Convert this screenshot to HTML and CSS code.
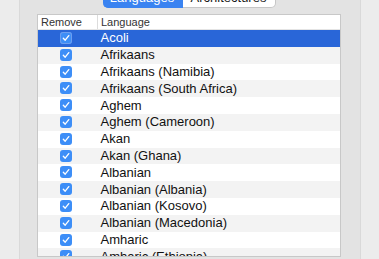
FILE: index.html
```html
<!DOCTYPE html>
<html lang="en">
<head>
    <meta charset="UTF-8">
    <title>Languages</title>
    <link rel="stylesheet" href="styles.css">
</head>
<body>
    <div class="panel">
        <div class="tabs">
            <button class="tab active">Languages</button>
            <button class="tab">Architectures</button>
        </div>
        <div class="list">
            <table>
                <thead>
                    <tr>
                        <th class="col-remove">Remove</th>
                        <th class="col-lang">Language</th>
                    </tr>
                </thead>
                <tbody>
                    <tr class="selected"><td class="col-remove"><span class="check"><svg viewBox="0 0 12 12"><path d="M3.3 6.2 L5.2 8.2 L8.8 3.6" /></svg></span></td><td>Acoli</td></tr>
                    <tr><td class="col-remove"><span class="check"><svg viewBox="0 0 12 12"><path d="M3.3 6.2 L5.2 8.2 L8.8 3.6" /></svg></span></td><td>Afrikaans</td></tr>
                    <tr><td class="col-remove"><span class="check"><svg viewBox="0 0 12 12"><path d="M3.3 6.2 L5.2 8.2 L8.8 3.6" /></svg></span></td><td>Afrikaans (Namibia)</td></tr>
                    <tr><td class="col-remove"><span class="check"><svg viewBox="0 0 12 12"><path d="M3.3 6.2 L5.2 8.2 L8.8 3.6" /></svg></span></td><td>Afrikaans (South Africa)</td></tr>
                    <tr><td class="col-remove"><span class="check"><svg viewBox="0 0 12 12"><path d="M3.3 6.2 L5.2 8.2 L8.8 3.6" /></svg></span></td><td>Aghem</td></tr>
                    <tr><td class="col-remove"><span class="check"><svg viewBox="0 0 12 12"><path d="M3.3 6.2 L5.2 8.2 L8.8 3.6" /></svg></span></td><td>Aghem (Cameroon)</td></tr>
                    <tr><td class="col-remove"><span class="check"><svg viewBox="0 0 12 12"><path d="M3.3 6.2 L5.2 8.2 L8.8 3.6" /></svg></span></td><td>Akan</td></tr>
                    <tr><td class="col-remove"><span class="check"><svg viewBox="0 0 12 12"><path d="M3.3 6.2 L5.2 8.2 L8.8 3.6" /></svg></span></td><td>Akan (Ghana)</td></tr>
                    <tr><td class="col-remove"><span class="check"><svg viewBox="0 0 12 12"><path d="M3.3 6.2 L5.2 8.2 L8.8 3.6" /></svg></span></td><td>Albanian</td></tr>
                    <tr><td class="col-remove"><span class="check"><svg viewBox="0 0 12 12"><path d="M3.3 6.2 L5.2 8.2 L8.8 3.6" /></svg></span></td><td>Albanian (Albania)</td></tr>
                    <tr><td class="col-remove"><span class="check"><svg viewBox="0 0 12 12"><path d="M3.3 6.2 L5.2 8.2 L8.8 3.6" /></svg></span></td><td>Albanian (Kosovo)</td></tr>
                    <tr><td class="col-remove"><span class="check"><svg viewBox="0 0 12 12"><path d="M3.3 6.2 L5.2 8.2 L8.8 3.6" /></svg></span></td><td>Albanian (Macedonia)</td></tr>
                    <tr><td class="col-remove"><span class="check"><svg viewBox="0 0 12 12"><path d="M3.3 6.2 L5.2 8.2 L8.8 3.6" /></svg></span></td><td>Amharic</td></tr>
                    <tr><td class="col-remove"><span class="check"><svg viewBox="0 0 12 12"><path d="M3.3 6.2 L5.2 8.2 L8.8 3.6" /></svg></span></td><td>Amharic (Ethiopia)</td></tr>
                </tbody>
            </table>
        </div>
    </div>
</body>
</html>
```

FILE: styles.css
```css
body {
    margin: 0;
    background-color: #ececec;
    font-family: "Liberation Sans", Arial, sans-serif;
    height: 259px;
    overflow: hidden;
}
.panel {
    margin: -14px 0 0 19px;
    width: 342px;
    height: 273px;
    box-sizing: border-box;
    background-color: #e3e3e3;
    border-left: 1px solid #d9d9d9;
    border-right: 1px solid #d9d9d9;
    padding: 0 19px 0 17px;
}
.tabs {
    display: flex;
    justify-content: center;
}
.tab {
    font-family: inherit;
    font-size: 13px;
    height: 22px;
    padding: 0;
    background-color: #fff;
    color: #1a1a1a;
    border: 1px solid #c6c6c6;
    border-left: none;
    border-radius: 0 5px 5px 0;
    width: 93px;
}
.tab.active {
    width: 80px;
    background-color: #3a83f1;
    border-color: #3a83f1;
    color: #fff;
    border-radius: 5px 0 0 5px;
}
.list {
    margin-top: 6px;
    height: 243px;
    box-sizing: border-box;
    overflow: hidden;
    background-color: #fff;
    border: 1px solid #c8c8c8;
}
table {
    width: 100%;
    border-collapse: collapse;
}
th {
    font-size: 11px;
    font-weight: normal;
    color: #333;
    text-align: left;
    height: 14px;
    padding: 0 0 0 3px;
    border-bottom: 1px solid #e4e4e4;
}
th.col-remove {
    width: 56px;
    border-right: 1px solid #dcdcdc;
}
td {
    font-size: 13px;
    color: #111;
    height: 16.8px;
    padding: 0 0 0 3px;
    line-height: 16px;
}
td.col-remove {
    text-align: center;
    padding: 0 4px 0 0;
}
tbody tr:nth-child(even) {
    background-color: #f3f3f3;
}
tr.selected {
    background-color: #2966d8;
}
tr.selected td {
    color: #fff;
}
.check {
    display: inline-block;
    width: 12px;
    height: 12px;
    border-radius: 3px;
    background-color: #3d8ef7;
    vertical-align: middle;
    margin-top: -2px;
}
tr.selected .check {
    box-shadow: 0 0 0 1px #6c9ef0 inset;
}
.check svg {
    display: block;
    width: 12px;
    height: 12px;
}
.check path {
    fill: none;
    stroke: #fff;
    stroke-width: 1.3;
    stroke-linecap: round;
    stroke-linejoin: round;
}
```
